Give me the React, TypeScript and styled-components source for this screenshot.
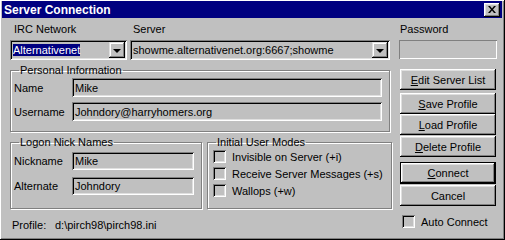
import React from "react";
import styled, { createGlobalStyle } from "styled-components";

const GlobalStyle = createGlobalStyle`
  html, body {
    margin: 0;
    padding: 0;
    background: #c0c0c0;
  }
  * {
    box-sizing: border-box;
  }
`;

const FONT = `"Liberation Sans", Arial, sans-serif`;

const Window = styled.div`
  width: 505px;
  height: 240px;
  padding: 1px 3px 2px 2px;
  background: #c0c0c0;
  font-family: ${FONT};
  font-size: 11px;
  color: #000;
  display: flex;
  flex-direction: column;
  box-shadow: inset -1px -1px #000, inset 1px 1px #fff, inset -2px -2px #808080;
`;

const TitleBar = styled.div`
  height: 17px;
  background: #000080;
  color: #fff;
  font-weight: bold;
  font-size: 12px;
  display: flex;
  align-items: center;
  justify-content: space-between;
  padding: 0 2px 0 2px;
`;

const CloseBtn = styled.div`
  width: 16px;
  height: 14px;
  background: #c0c0c0;
  display: flex;
  align-items: center;
  justify-content: center;
  box-shadow: inset -1px -1px #000, inset 1px 1px #fff, inset -2px -2px #808080,
    inset 2px 2px #dfdfdf;
`;

const Body = styled.div`
  display: flex;
  gap: 7px;
  padding: 5px 5px 0 8px;
  flex: 1;
`;

const LeftCol = styled.div`
  width: 382px;
  display: flex;
  flex-direction: column;
`;

const RightCol = styled.div`
  width: 98px;
  display: flex;
  flex-direction: column;
`;

const TopRow = styled.div`
  display: flex;
  gap: 3px;
`;

const FieldStack = styled.div<{ $w: number }>`
  width: ${(p) => p.$w}px;
  display: flex;
  flex-direction: column;
  gap: 4px;
`;

const Label = styled.div<{ $pad?: number }>`
  line-height: 13px;
  padding-left: ${(p) => p.$pad ?? 0}px;
  white-space: nowrap;
`;

const sunken = `
  box-shadow: inset 1px 1px #808080, inset -1px -1px #fff, inset 2px 2px #000,
    inset -2px -2px #dfdfdf;
`;

const Combo = styled.div`
  height: 20px;
  background: #c0c0c0;
  ${sunken}
  display: flex;
  align-items: center;
  padding: 2px 2px 2px 3px;
`;

const ComboText = styled.span<{ $selected?: boolean }>`
  flex: 1;
  line-height: 13px;
  white-space: nowrap;
  overflow: hidden;
  span {
    background: ${(p) => (p.$selected ? "#000080" : "transparent")};
    color: ${(p) => (p.$selected ? "#fff" : "#000")};
  }
`;

const DropBtn = styled.div`
  width: 16px;
  height: 16px;
  flex: none;
  background: #c0c0c0;
  display: flex;
  align-items: center;
  justify-content: center;
  box-shadow: inset -1px -1px #000, inset 1px 1px #dfdfdf, inset -2px -2px #808080,
    inset 2px 2px #fff;

  &::after {
    content: "";
    border-left: 4px solid transparent;
    border-right: 4px solid transparent;
    border-top: 4px solid #000;
    margin-top: 1px;
  }
`;

const Group = styled.fieldset<{ $w: number; $h: number }>`
  width: ${(p) => p.$w}px;
  height: ${(p) => p.$h}px;
  margin: 0;
  padding: 1px 7px 0 3px;
  border: 1px solid #808080;
  box-shadow: inset 1px 1px #fff, 1px 1px #fff;
  min-width: 0;
  display: flex;
  flex-direction: column;
  gap: 5px;
`;

const Legend = styled.legend`
  padding: 0 1px;
  margin-left: 5px;
  line-height: 13px;
`;

const FieldRow = styled.div`
  display: flex;
  align-items: center;
`;

const RowLabel = styled.div`
  width: 58px;
  flex: none;
`;

const Edit = styled.div<{ $h?: number }>`
  flex: 1;
  height: ${(p) => p.$h ?? 19}px;
  background: #c0c0c0;
  ${sunken}
  display: flex;
  align-items: center;
  padding: 0 3px;
  white-space: nowrap;
`;

const FlatEdit = styled.div`
  height: 19px;
  background: #c0c0c0;
  box-shadow: inset 1px 1px #808080, inset -1px -1px #fff;
`;

const BottomRow = styled.div`
  display: flex;
  gap: 5px;
  margin-top: 4px;
`;

const CheckRow = styled.label`
  display: flex;
  align-items: center;
  gap: 6px;
  height: 13px;
  margin-left: 2px;
`;

const CheckBox = styled.span`
  width: 13px;
  height: 13px;
  flex: none;
  background: #c0c0c0;
  ${sunken}
`;

const ChecksWrap = styled.div`
  display: flex;
  flex-direction: column;
  gap: 4px;
`;

const ProfileLine = styled.div`
  display: flex;
  margin-top: 10px;
  padding-left: 2px;
  line-height: 13px;

  span:first-child {
    width: 43px;
  }
`;

const Button = styled.div<{ $default?: boolean; $mt?: number }>`
  height: ${(p) => (p.$default ? 22 : 21)}px;
  flex: none;
  margin: ${(p) => p.$mt ?? 0}px 1px 0 1px;
  background: #c0c0c0;
  display: flex;
  align-items: center;
  justify-content: center;
  white-space: nowrap;
  border: ${(p) => (p.$default ? "1px solid #000" : "none")};
  box-shadow: inset -1px -1px #000, inset 1px 1px #fff, inset -2px -2px #808080,
    inset 2px 2px #dfdfdf;
`;

const AutoRow = styled(CheckRow)`
  margin-top: 9px;
  margin-left: 3px;
`;

export default function App() {
  return (
    <>
      <GlobalStyle />
      <Window>
        <TitleBar>
          <span>Server Connection</span>
          <CloseBtn>
            <svg width="8" height="7" viewBox="0 0 8 7">
              <path d="M0 0h2l2 2.5L6 0h2L5 3.5 8 7H6L4 4.5 2 7H0l3-3.5z" fill="#000" />
            </svg>
          </CloseBtn>
        </TitleBar>
        <Body>
          <LeftCol>
            <TopRow>
              <FieldStack $w={117}>
                <Label $pad={4}>IRC Network</Label>
                <Combo>
                  <ComboText $selected>
                    <span>Alternativenet</span>
                  </ComboText>
                  <DropBtn />
                </Combo>
              </FieldStack>
              <FieldStack $w={260}>
                <Label $pad={3}>Server</Label>
                <Combo>
                  <ComboText>
                    <span>showme.alternativenet.org:6667;showme</span>
                  </ComboText>
                  <DropBtn />
                </Combo>
              </FieldStack>
            </TopRow>

            <Group $w={380} $h={68} style={{ marginTop: 4 }}>
              <Legend>Personal Information</Legend>
              <FieldRow>
                <RowLabel>Name</RowLabel>
                <Edit>Mike</Edit>
              </FieldRow>
              <FieldRow>
                <RowLabel>Username</RowLabel>
                <Edit>Johndory@harryhomers.org</Edit>
              </FieldRow>
            </Group>

            <BottomRow>
              <Group $w={192} $h={73}>
                <Legend>Logon Nick Names</Legend>
                <FieldRow style={{ marginTop: 2 }}>
                  <RowLabel>Nickname</RowLabel>
                  <Edit $h={18}>Mike</Edit>
                </FieldRow>
                <FieldRow style={{ marginTop: 2 }}>
                  <RowLabel>Alternate</RowLabel>
                  <Edit $h={18}>Johndory</Edit>
                </FieldRow>
              </Group>
              <Group $w={185} $h={73}>
                <Legend>Initial User Modes</Legend>
                <ChecksWrap>
                  <CheckRow>
                    <CheckBox />
                    Invisible on Server (+i)
                  </CheckRow>
                  <CheckRow>
                    <CheckBox />
                    Receive Server Messages (+s)
                  </CheckRow>
                  <CheckRow>
                    <CheckBox />
                    Wallops (+w)
                  </CheckRow>
                </ChecksWrap>
              </Group>
            </BottomRow>

            <ProfileLine>
              <span>Profile:</span>
              <span>d:\pirch98\pirch98.ini</span>
            </ProfileLine>
          </LeftCol>

          <RightCol>
            <FieldStack $w={98}>
              <Label $pad={1}>Password</Label>
              <FlatEdit />
            </FieldStack>
            <Button $mt={10}>
              <span>
                <u>E</u>dit Server List
              </span>
            </Button>
            <Button $mt={3}>
              <span>
                <u>S</u>ave Profile
              </span>
            </Button>
            <Button $mt={0}>
              <span>
                <u>L</u>oad Profile
              </span>
            </Button>
            <Button $mt={1}>
              <span>
                <u>D</u>elete Profile
              </span>
            </Button>
            <Button $default $mt={5}>
              <span>
                <u>C</u>onnect
              </span>
            </Button>
            <Button $mt={1}>Cancel</Button>
            <AutoRow>
              <CheckBox />
              Auto Connect
            </AutoRow>
          </RightCol>
        </Body>
      </Window>
    </>
  );
}
